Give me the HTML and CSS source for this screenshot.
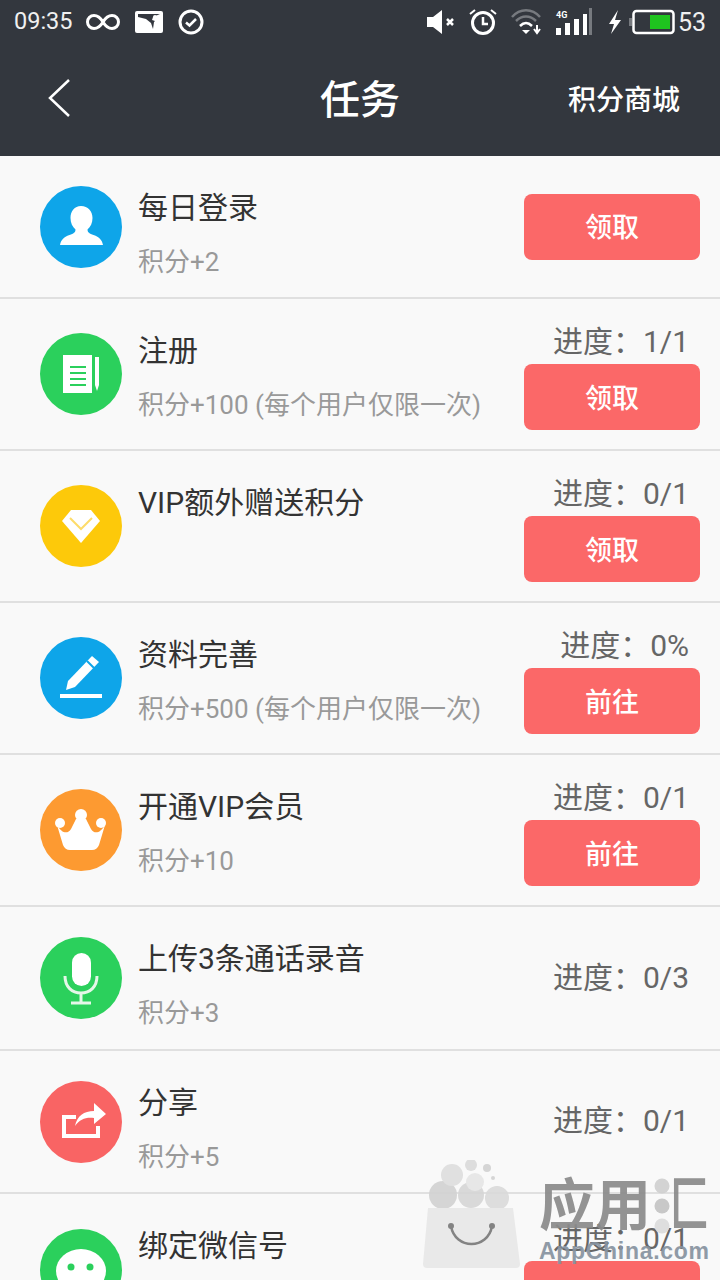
FILE: index.html
```html
<!DOCTYPE html>
<html lang="zh">
<head>
<meta charset="utf-8">
<title>任务</title>
<link rel="stylesheet" href="styles.css">
</head>
<body>
<div class="page">
  <header class="header">
    <div class="status">
      <div class="status-left">
        <span class="time">09:35</span>
        <svg class="ic-inf" viewBox="0 0 34 20"><path d="M17 10C14 5 11 3.500 8 3.500a6.500 6.500 0 0 0 0 13c3 0 6-1.500 9-6.500s6-6.500 9-6.500a6.500 6.500 0 0 1 0 13c-3 0-6-1.500-9-6.500z" fill="none" stroke="#fff" stroke-width="3"/></svg>
        <svg class="ic-pic" viewBox="0 0 28 22"><rect width="28" height="22" rx="2" fill="#fff"/><path d="M3 3h22l-7 3-1 3 3 1-1 1-1 7-2-6-5-4-4-1-4-1z" fill="#33373e"/><circle cx="20" cy="6" r="2" fill="#fff"/></svg>
        <svg class="ic-check" viewBox="0 0 26 26"><circle cx="13" cy="13" r="11" fill="none" stroke="#fff" stroke-width="3"/><path d="M8 13.500l3.500 3L18 10" fill="none" stroke="#fff" stroke-width="2.500"/></svg>
      </div>
      <div class="status-right">
        <svg class="ic-mute" viewBox="0 0 30 26"><path d="M1 8h6l9-7v24l-9-7H1z" fill="#fff"/><path d="M21 10l6 6m0-6l-6 6" stroke="#fff" stroke-width="2.500"/></svg>
        <svg class="ic-alarm" viewBox="0 0 28 28"><circle cx="14" cy="15" r="10.500" fill="none" stroke="#fff" stroke-width="3"/><path d="M14 9v7h5" fill="none" stroke="#fff" stroke-width="2.500"/><path d="M1 6l5-4M27 6l-5-4" stroke="#fff" stroke-width="2"/></svg>
        <svg class="ic-wifi" viewBox="0 0 32 28"><path d="M1 9c8-9 20-9 28 0M5 13c6-6 14-6 20 0" fill="none" stroke="#777a7f" stroke-width="2.500"/><path d="M9 18c4-4 8-4 12 0" fill="none" stroke="#fff" stroke-width="2.500"/><path d="M11 22h8l-4 4z" fill="#fff"/><path d="M26 17v7m-3-3l3 4 3-4" fill="none" stroke="#fff" stroke-width="2"/></svg>
        <svg class="ic-signal" viewBox="0 0 38 28"><path d="M1 20h5v7H1zM10 15h5v12h-5zM19 11h5v16h-5zM28 6h4v21h-4z" fill="#fff"/><path d="M34 0h3v27h-3z" fill="#777a7f"/><text class="sig-text" x="1" y="10">4G</text></svg>
        <svg class="ic-bolt" viewBox="0 0 14 24"><path d="M10 0L1 14h5l-3 10 10-14H7z" fill="#fff"/></svg>
        <svg class="ic-batt" viewBox="0 0 46 26"><rect x="0" y="9" width="3" height="8" fill="#777a7f"/><rect x="4.500" y="2" width="40" height="22" rx="3" fill="none" stroke="#fff" stroke-width="2.500"/><rect x="21" y="6" width="20" height="14" fill="#1fc41f"/></svg>
        <span class="batt-num">53</span>
      </div>
    </div>
    <nav class="nav">
      <svg class="back" viewBox="0 0 24 38"><path d="M22 1L3 19l19 18" fill="none" stroke="#fff" stroke-width="2.500"/></svg>
      <h1 class="title">任务</h1>
      <span class="shop">积分商城</span>
    </nav>
  </header>

  <main class="list">
    <section class="row row-a">
      <div class="icon c-blue"><svg viewBox="0 0 82 82"><path d="M41 20c7 0 11.500 5 11.500 12 0 5-2 9-5 11.500 0 3 2 4 6 5.500 6 2 8.500 5 9.500 10H20c1-5 3.500-8 9.500-10 4-1.500 6-2.500 6-5.500-3-2.500-5-6.500-5-11.500 0-7 4-12 10.500-12z" fill="#fff"/></svg></div>
      <div class="text"><div class="name">每日登录</div><div class="sub">积分+2</div></div>
      <div class="side"><button class="btn">领取</button></div>
    </section>
    <section class="row row-t">
      <div class="icon c-green"><svg viewBox="0 0 82 82"><path d="M23 22h29v38H23z" fill="#fff"/><path d="M30 34h16M30 40h16M30 46h16M30 52h16" stroke="#2bd05c" stroke-width="2"/><path d="M55 24h4v28l-2 6-2-6z" fill="#fff"/></svg></div>
      <div class="text"><div class="name">注册</div><div class="sub">积分+100 (每个用户仅限一次)</div></div>
      <div class="side"><div class="prog">进度：1/1</div><button class="btn">领取</button></div>
    </section>
    <section class="row row-t">
      <div class="icon c-yellow"><svg viewBox="0 0 82 82"><path d="M31 25H51L60 36 41 58 22 36Z" fill="#fff"/><path d="M30 33l11 11 11-11" fill="none" stroke="#fddc6a" stroke-width="2"/></svg></div>
      <div class="text"><div class="name">VIP额外赠送积分</div></div>
      <div class="side"><div class="prog">进度：0/1</div><button class="btn">领取</button></div>
    </section>
    <section class="row row-t">
      <div class="icon c-blue"><svg viewBox="0 0 82 82"><path d="M52 19l7 6-24 25-9 3 2-9z" fill="#fff"/><path d="M20 59h42" stroke="#fff" stroke-width="4"/><path d="M47 24l7 7" stroke="#0ea5e9" stroke-width="2"/></svg></div>
      <div class="text"><div class="name">资料完善</div><div class="sub">积分+500 (每个用户仅限一次)</div></div>
      <div class="side"><div class="prog">进度：0%</div><button class="btn">前往</button></div>
    </section>
    <section class="row row-t">
      <div class="icon c-orange"><svg viewBox="0 0 82 82"><path d="M17 36L23 56Q25 61 30 61H52Q57 61 59 56L65 36C60 45 54 45 51 40L46 30H36L31 40C28 45 22 45 17 36Z" fill="#fff"/><circle cx="20" cy="34" r="5" fill="#fff"/><circle cx="41" cy="26" r="6" fill="#fff"/><circle cx="61" cy="34" r="5" fill="#fff"/></svg></div>
      <div class="text"><div class="name">开通VIP会员</div><div class="sub">积分+10</div></div>
      <div class="side"><div class="prog">进度：0/1</div><button class="btn">前往</button></div>
    </section>
    <section class="row row-m">
      <div class="icon c-green"><svg viewBox="0 0 82 82"><rect x="32" y="16" width="19" height="33" rx="9.500" fill="#fff"/><path d="M25 39c0 11 7 17 16 17s16-6 16-17M41 56v10M31 66h20" fill="none" stroke="#e4f7e8" stroke-width="3"/></svg></div>
      <div class="text"><div class="name">上传3条通话录音</div><div class="sub">积分+3</div></div>
      <div class="side"><div class="prog prog-only">进度：0/3</div></div>
    </section>
    <section class="row row-a">
      <div class="icon c-red"><svg viewBox="0 0 82 82"><path d="M36 36H24V55H58V45" fill="none" stroke="#fff" stroke-width="4"/><path d="M35 45C37 35 44 30 54 30V22L66 33 54 43V37C46 36 40 38 35 45Z" fill="#fff"/></svg></div>
      <div class="text"><div class="name">分享</div><div class="sub">积分+5</div></div>
      <div class="side"><div class="prog prog-only">进度：0/1</div></div>
    </section>
    <section class="row row-t row-last">
      <div class="icon c-green"><svg viewBox="0 0 82 82"><ellipse cx="41" cy="42" rx="25" ry="22" fill="#fff"/><circle cx="31" cy="38" r="3.500" fill="#2bd05c"/><circle cx="50" cy="38" r="3.500" fill="#2bd05c"/></svg></div>
      <div class="text"><div class="name">绑定微信号</div><div class="sub">积分+5</div></div>
      <div class="side"><div class="prog">进度：0/1</div><button class="btn">前往</button></div>
    </section>
  </main>

  <aside class="wm">
    <svg class="wm-bag" viewBox="0 0 104 120"><circle cx="21" cy="35" r="14" fill="#d2d2d2"/><circle cx="49" cy="35" r="13" fill="#d6d6d6"/><circle cx="75" cy="38" r="12" fill="#dadada"/><circle cx="30" cy="15" r="11" fill="#dedede"/><circle cx="49" cy="5" r="6" fill="#dadada"/><circle cx="65" cy="8" r="4" fill="#d2d2d2"/><circle cx="71" cy="18" r="2" fill="#d2d2d2"/><circle cx="53" cy="22" r="9" fill="#e6e6e6"/><path d="M6 48H91L98 104Q98 108 94 108H5Q1 108 1 104Z" fill="#e8e8e8"/><path d="M29 66C33 90 66 90 70 66" fill="none" stroke="#777" stroke-width="2.500"/><circle cx="29" cy="66" r="3" fill="#777"/><circle cx="70" cy="66" r="3" fill="#777"/></svg>
    <div class="wm-text">
      <div class="wm-cn"><span class="wm-ch">应用</span><svg class="wm-dots" viewBox="0 0 16 56"><circle cx="8" cy="8" r="7.500" fill="#d0d0d0"/><circle cx="8" cy="28" r="7.500" fill="#c4c4c4"/><circle cx="8" cy="48" r="7.500" fill="#dcdcdc"/></svg><span class="wm-k">匚</span></div>
      <div class="wm-en">AppChina.com</div>
    </div>
  </aside>
</div>
</body>
</html>
```

FILE: styles.css
```css
* { box-sizing: border-box; margin: 0; padding: 0; }
html, body { width: 720px; height: 1280px; overflow: hidden; }
body { font-family: Roboto, "Noto Sans CJK SC", sans-serif; background: #f9f9f9; }
.page { position: relative; width: 720px; height: 1280px; overflow: hidden; }

.header { height: 156px; background: #33373e; color: #fff; display: flex; flex-direction: column; }
.status { height: 44px; display: flex; justify-content: space-between; align-items: center; padding: 0 14px 0 14px; }
.status-left, .status-right { display: flex; align-items: center; }
.time { font: 23.500px/1 Roboto, sans-serif; color: #f0f0f0; margin-right: 13px; }
.ic-inf { width: 34px; height: 20px; margin-right: 15px; }
.ic-pic { width: 28px; height: 22px; margin-right: 15px; }
.ic-check { width: 26px; height: 26px; }
.ic-mute { width: 30px; height: 26px; margin-right: 13px; }
.ic-alarm { width: 28px; height: 28px; margin-right: 14px; }
.ic-wifi { width: 32px; height: 28px; margin-right: 12px; }
.ic-signal { width: 38px; height: 28px; margin-right: 15px; }
.sig-text { font: bold 9px Roboto, sans-serif; fill: #fff; }
.ic-bolt { width: 14px; height: 24px; margin-right: 7px; }
.ic-batt { width: 46px; height: 26px; margin-right: 3px; }
.batt-num { font: 25px/1 Roboto, sans-serif; color: #f0f0f0; }

.nav { flex: 1; display: flex; align-items: center; justify-content: space-between; padding: 0 40px 4px 47px; position: relative; }
.back { width: 24px; height: 38px; }
.title { font-size: 40px; font-weight: 500; line-height: 1; color: #fff; position: absolute; left: 320px; top: 37px; }
.shop { font-size: 28px; font-weight: 500; line-height: 1; color: #fff; padding-top: 6px; }

.list { display: flex; flex-direction: column; }
.row { display: flex; align-items: center; padding: 0 20px 0 40px; border-bottom: 2px solid #e0e0e0; background: #f9f9f9; flex: none; }
.row-a { height: 143px; }
.row-t { height: 152px; }
.row-m { height: 144px; }
.row-last { border-bottom: 0; }
.icon { width: 82px; height: 82px; border-radius: 50%; flex: none; margin-right: 16px; }
.icon svg { display: block; width: 82px; height: 82px; }
.c-blue { background: #0ea5e9; }
.c-green { background: #2bd05c; }
.c-yellow { background: #fdc90a; }
.c-orange { background: #fd9a31; }
.c-red { background: #f96464; }

.text { flex: 1; min-width: 0; align-self: flex-start; padding-top: 32px; }
.name { font-size: 30px; line-height: 40px; color: #333; white-space: nowrap; }
.sub { font-size: 26px; line-height: 36px; color: #999; margin-top: 16px; white-space: nowrap; }

.side { display: flex; flex-direction: column; align-items: flex-end; flex: none; }
.row-t .side { align-self: flex-end; padding-bottom: 19px; }
.prog { font-size: 30px; line-height: 40px; color: #666; margin: 0 11px 2px 0; white-space: nowrap; }
.prog-only { margin-bottom: 1px; }
.btn { width: 176px; height: 66px; border: 0; border-radius: 8px; background: #fb6868; color: #fff; padding-top: 4px; font: 500 27px/1 Roboto, "Noto Sans CJK SC", sans-serif; }

.wm { position: absolute; left: 422px; top: 1160px; display: flex; pointer-events: none; }
.wm-bag { width: 104px; height: 120px; margin-right: 13px; opacity: .9; }
.wm-text { width: 182px; height: 120px; white-space: nowrap; opacity: .92; }
.wm-cn { display: flex; align-items: center; font-size: 56px; font-weight: 700; line-height: 62px; color: #8b8b8b; margin-top: 15px; height: 62px; }
.wm-ch { flex: none; }
.wm-dots { width: 16px; height: 56px; margin: 0 0 0 3px; flex: none; }
.wm-k { flex: none; display: block; width: 38px; font-size: 60px; transform: scaleX(.65); transform-origin: left center; }
.wm-en { font: 700 23px/1 "Liberation Sans", sans-serif; color: #8793a0; margin-top: 3px; letter-spacing: .7px; }
```
